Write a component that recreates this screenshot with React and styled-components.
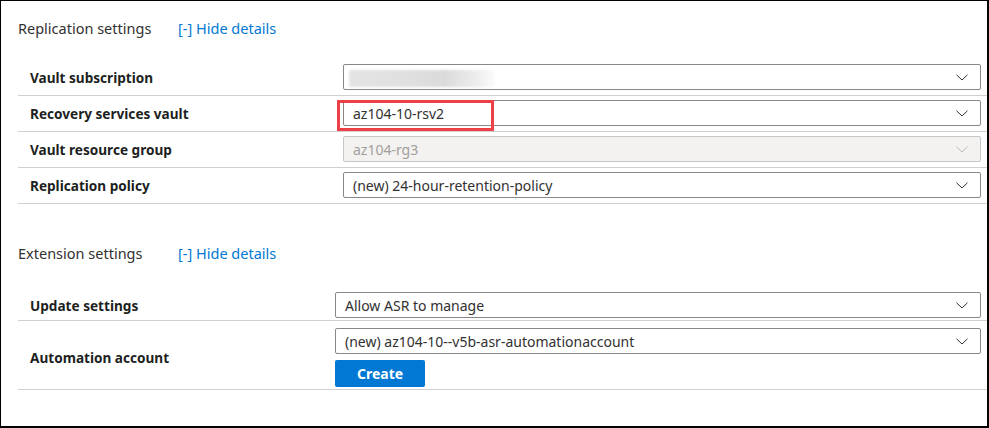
import React from "react";
import styled, { createGlobalStyle } from "styled-components";

const Global = createGlobalStyle`
  html, body { margin: 0; padding: 0; background: #fff; }
  body { font-family: "Noto Sans", "Open Sans", sans-serif; color: #323130; }
  * { box-sizing: border-box; }
`;

const Frame = styled.div`
  width: 989px;
  height: 428px;
  border-top: 1px solid #000;
  border-left: 1px solid #000;
  border-right: 2px solid #000;
  border-bottom: 2px solid #000;
  padding-left: 17px;
  overflow: hidden;
`;

const Section = styled.section`
  display: flex;
  flex-direction: column;
  padding-top: ${(p) => p.$top}px;
`;

const Header = styled.div`
  display: grid;
  grid-template-columns: 160px auto;
  justify-content: start;
  align-items: center;
  height: 22px;
  font-size: 14.5px;
  margin-bottom: ${(p) => p.$gap}px;
`;

const Title = styled.span`
  color: #323130;
`;

const Link = styled.a`
  color: #0078d4;
  text-decoration: none;
  cursor: pointer;
`;

const Row = styled.div`
  display: grid;
  grid-template-columns: ${(p) => p.$label}px 1fr;
  align-items: center;
  padding: ${(p) => p.$pad || "4px 6px 5px 0"};
  border-bottom: 1px solid #d2d0ce;
  position: relative;
`;

const Label = styled.div`
  padding-left: 12px;
  font-size: 13.6px;
  font-weight: 700;
  color: #201f1e;
`;

const Control = styled.div`
  display: flex;
  flex-direction: column;
  gap: 6px;
  align-items: flex-start;
`;

const Select = styled.div`
  width: 100%;
  height: 26px;
  display: flex;
  align-items: center;
  justify-content: space-between;
  padding: 0 12px 0 9px;
  border: 1px solid ${(p) => (p.$disabled ? "#c8c6c4" : "#8a8886")};
  border-radius: 2px;
  background: ${(p) => (p.$disabled ? "#f3f2f1" : "#fff")};
  color: ${(p) => (p.$disabled ? "#a19f9d" : "#323130")};
  font-size: 14px;
  white-space: nowrap;
`;

const Blur = styled.div`
  width: 146px;
  height: 17px;
  margin-left: -4px;
  margin-top: 3px;
  background: linear-gradient(to right, #e4e4e4 0%, #e0e0e0 40%, #dadada 65%, #eeeeee 88%, #fbfbfb 100%);
  filter: blur(1px);
`;

const Chevron = styled.svg`
  width: 12px;
  height: 7px;
  flex: none;
  margin-left: auto;
`;

const Highlight = styled.div`
  position: absolute;
  left: 319px;
  top: 4px;
  width: 157px;
  height: 31px;
  border: 3px solid #ee4146;
  pointer-events: none;
`;

const Button = styled.button`
  width: 90px;
  height: 27px;
  border: none;
  border-radius: 2px;
  background: #0078d4;
  color: #fff;
  font-family: inherit;
  font-size: 14px;
  font-weight: 700;
  padding: 0;
`;

function Arrow({ disabled }) {
  return (
    <Chevron viewBox="0 0 12 7">
      <path
        d="M0.5 0.8 L6 6 L11.5 0.8"
        fill="none"
        stroke={disabled ? "#bdbbb9" : "#323130"}
        strokeWidth="1"
      />
    </Chevron>
  );
}

function Dropdown({ value, disabled, blurred }) {
  return (
    <Select $disabled={disabled}>
      {blurred ? <Blur /> : <span>{value}</span>}
      <Arrow disabled={disabled} />
    </Select>
  );
}

export default function App() {
  return (
    <>
      <Global />
      <Frame>
        <Section $top={16}>
          <Header $gap={21}>
            <Title>Replication settings</Title>
            <Link>[-] Hide details</Link>
          </Header>
          <Row $label={325}>
            <Label>Vault subscription</Label>
            <Control>
              <Dropdown blurred />
            </Control>
          </Row>
          <Row $label={325}>
            <Label>Recovery services vault</Label>
            <Control>
              <Dropdown value="az104-10-rsv2" />
            </Control>
            <Highlight />
          </Row>
          <Row $label={325}>
            <Label>Vault resource group</Label>
            <Control>
              <Dropdown value="az104-rg3" disabled />
            </Control>
          </Row>
          <Row $label={325}>
            <Label>Replication policy</Label>
            <Control>
              <Dropdown value="(new) 24-hour-retention-policy" />
            </Control>
          </Row>
        </Section>
        <Section $top={38}>
          <Header $gap={25}>
            <Title>Extension settings</Title>
            <Link>[-] Hide details</Link>
          </Header>
          <Row $label={317} $pad="3px 6px 2px 0">
            <Label>Update settings</Label>
            <Control>
              <Dropdown value="Allow ASR to manage" />
            </Control>
          </Row>
          <Row $label={317} $pad="7px 6px 2px 0">
            <Label>Automation account</Label>
            <Control>
              <Dropdown value="(new) az104-10--v5b-asr-automationaccount" />
              <Button>Create</Button>
            </Control>
          </Row>
        </Section>
      </Frame>
    </>
  );
}
